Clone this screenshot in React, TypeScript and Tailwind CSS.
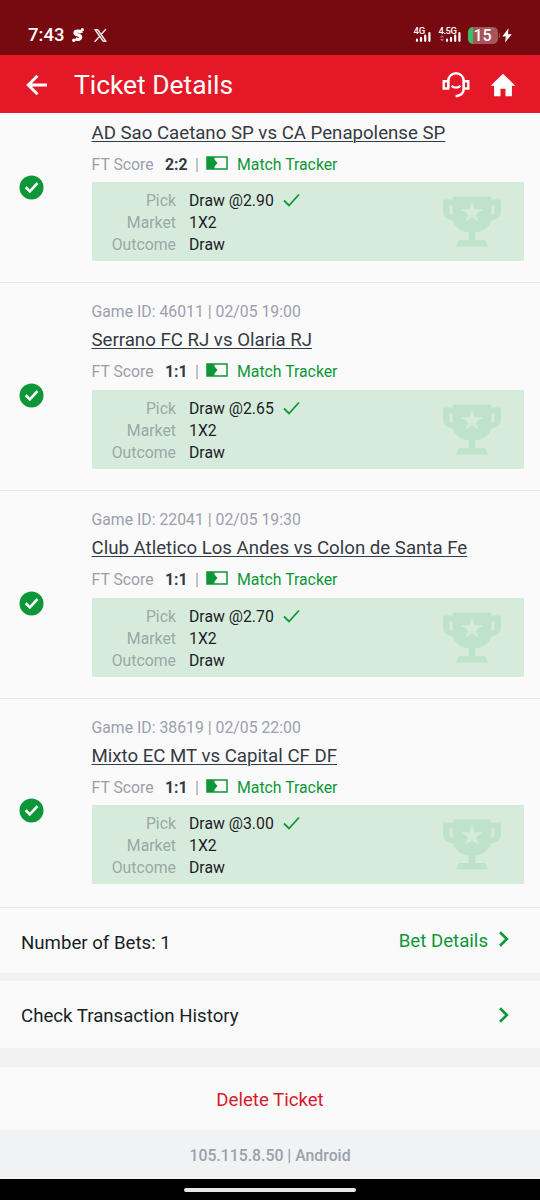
type Game = {
  id?: string;
  time?: string;
  name: string;
  score: string;
  odds: string;
};

const games: Game[] = [
  { name: "AD Sao Caetano SP vs CA Penapolense SP", score: "2:2", odds: "2.90" },
  { id: "46011", time: "02/05 19:00", name: "Serrano FC RJ vs Olaria RJ", score: "1:1", odds: "2.65" },
  { id: "22041", time: "02/05 19:30", name: "Club Atletico Los Andes vs Colon de Santa Fe", score: "1:1", odds: "2.70" },
  { id: "38619", time: "02/05 22:00", name: "Mixto EC MT vs Capital CF DF", score: "1:1", odds: "3.00" },
];

function Signal() {
  return (
    <svg className="w-4 h-[10px]" viewBox="0 0 16 10" fill="none" stroke="currentColor" strokeWidth={2.2} strokeLinecap="round">
      <path d="M2 7.7V8.8M6 5.8V8.8M10.2 3.6V8.8M14.4 1.2V8.8" />
    </svg>
  );
}

function StatusBar() {
  return (
    <div className="flex h-[55px] bg-[#770910] pt-[25px] pl-7 pr-[28px] text-white">
      <span className="w-[44px] text-[18.5px] leading-5 font-medium">7:43</span>
      <svg className="mt-[3px] w-[12px] h-[14px]" viewBox="0 0 12 14" fill="none" stroke="currentColor">
        <path d="M9.2 5.2C8.6 2.6 3.2 2.3 3 4.8C2.8 7.4 9 6.2 8.7 9.2C8.5 11.7 5.2 11.8 3.4 10.8" strokeWidth={3.3} />
        <circle cx="10.3" cy="1.7" r="1.6" fill="currentColor" stroke="none" />
        <circle cx="1.8" cy="12.2" r="1.7" fill="currentColor" stroke="none" />
      </svg>
      <svg className="ml-[10px] mt-[4px] w-[13px] h-[13px]" viewBox="0 0 24 24" fill="currentColor">
        <path d="M14.1 10.3 22.3 0.8h-2l-7.1 8.2L7.5 0.8H0.9l8.6 12.5L0.9 23.2h2l7.5-8.7 6 8.7h6.6ZM11.5 13.4l-.9-1.3L3.6 2.3h3l5.6 8 .9 1.3 7.3 10.3h-3Z" stroke="currentColor" strokeWidth="1.2" />
      </svg>
      {/* Mobile networks and battery */}
      <div className="ml-auto mt-px flex">
        <div className="flex w-[25px] flex-col">
          <span className="-ml-px h-[6px] text-[9.5px] leading-[9px] font-medium tracking-tight">4G</span>
          <Signal />
        </div>
        <div className="flex w-[28px] flex-col">
          <span className="-ml-px h-[6px] text-[9.5px] leading-[9px] font-medium tracking-tighter">4.5G</span>
          <div className="flex">
            <svg className="w-[5px] h-[10px]" viewBox="0 0 5 10" fill="#c0686f">
              <path d="M2 3 4 5.5H0ZM2 9.5 4 7H0Z" />
            </svg>
            <Signal />
          </div>
        </div>
        <div className="mt-px h-[17px] w-[30px] overflow-hidden rounded-[5px] bg-linear-to-r from-[#35c06c] from-16% to-[#a8545b] to-16% text-center text-[16px] leading-[18px] font-medium">
          15
        </div>
        <div className="mt-[7px] ml-[1px] h-[5px] w-[1.5px] rounded-r bg-[#a8545b]" />
        <svg className="ml-[2px] mt-[2px] w-[10px] h-[15px]" viewBox="0 0 10 15" fill="currentColor">
          <path d="M6.5.3.3 8.4h3.6L3 14.5 9.8 6.2H6Z" />
        </svg>
      </div>
    </div>
  );
}

function Header() {
  return (
    <header className="flex h-[58px] items-center bg-[#e41827] pl-[26px] pr-[24px] text-white">
      <svg className="mt-px w-[22px] h-[22px]" viewBox="0 0 22 22" fill="none" stroke="currentColor" strokeWidth={3}>
        <path d="M21 11H3M11.5 1.8 2.3 11l9.2 9.2" />
      </svg>
      <h1 className="ml-[26px] mt-[3px] whitespace-nowrap text-[26.4px]">Ticket Details</h1>
      <svg className="ml-auto w-[28px] h-[27px]" viewBox="0 0 28 27" fill="none" stroke="currentColor" strokeWidth={2.4}>
        <path d="M6.200 17.500V10a7.800 7.800 0 0 1 15.600 0v7c0 5-3.200 7.800-8.200 8.200" />
        <path d="M6.200 10.300H1.700v7.200H6.200ZM21.800 10.300h4.500v7.200h-4.500Z" />
        <path d="M9.600 14.800c2.600 2.300 6.200 2.300 8.800 0" />
      </svg>
      <svg className="ml-[20px] mt-px w-[26px] h-[24px]" viewBox="0 0 26 24" fill="currentColor">
        <path d="M13 .7.6 12.8h3.5v10.4h6.4v-7.5h5v7.5h6.4V12.8h3.5Z" />
      </svg>
    </header>
  );
}

function Trophy() {
  return (
    <svg className="w-[58px] h-[51px]" viewBox="0 0 58 51">
      <path
        fill="#bfe3ca"
        fillRule="evenodd"
        d="M10 .5h38v3h10v11.5c0 5-3 8.500-9.500 9.500C46 31 40.500 35.500 32.500 36.500V44H42L45 50.500H13L16 44H25.500V36.500C17.500 35.500 12 31 9.500 24.500 3 23.500 0 20 0 15V3.500H10ZM6.500 9.500v6c0 2 1.200 3.300 3 4V9.500ZM51.500 9.500h-3v10c1.800-.7 3-2 3-4Z"
      />
      <path fill="#d7ebdc" d="M29 5.500 31.500 13.200H39.800L33.100 18 35.700 26 29 21.100 22.300 26 24.900 18 18.200 13.200H26.500Z" />
    </svg>
  );
}

function GameRow({ game }: { game: Game }) {
  return (
    <li className={`group flex border-b border-[#e6e7ea] ${game.id ? "h-[208px] pt-4 last:h-[209px]" : "h-[170px] pt-[4px]"}`}>
      <div className="w-[92px] shrink-0">
        <svg className={`ml-[19px] w-[25px] h-[25px] ${game.id ? "mt-[84px] group-last:mt-[83px]" : "mt-[58px]"}`} viewBox="0 0 25 25">
          <circle cx="12.500" cy="12.500" r="12" fill="#0d9737" />
          <path d="m6.700 12.300 4.100 4.100 7.700-8.200" fill="none" stroke="#fff" strokeWidth={2.700} />
        </svg>
      </div>
      <div className="w-[432px]">
        {game.id && (
          <p className="-ml-[0.5px] text-[15.8px] leading-[25px] whitespace-nowrap text-[#9ca0ab]">
            Game ID: {game.id} | {game.time}
          </p>
        )}
        <p className="text-[18.65px] leading-8 whitespace-nowrap text-[#353a45]">
          <span className="-ml-[0.5px] underline decoration-1 underline-offset-[2px]">{game.name}</span>
        </p>
        <div className="-ml-[0.5px] mt-1 flex h-6 items-center text-[15.8px] whitespace-nowrap text-[#9ca0ab]">
          <span className="w-[73.5px]">FT Score</span>
          <span className="w-[30px] font-bold text-[#353a45]">{game.score}</span>
          <span className="w-[11px]">|</span>
          <svg className="-mt-[5px] w-[22px] h-[14px]" viewBox="0 0 22 14">
            <path d="M1 1h20v12H1Z" fill="none" stroke="#0d9737" strokeWidth={1.500} />
            <path d="M1 1h7.500V3.500L11.500 7l-3 3.500V13H1Z" fill="#0d9737" />
          </svg>
          <span className="ml-[9px] text-[#0d9737]">Match Tracker</span>
        </div>
        <div className={`flex h-[79px] justify-between rounded-[1px] bg-[#d7ebdc] pt-[8px] pr-[23px] ${game.id ? "mt-[6px] group-last:mt-[5px]" : "mt-[5px]"}`}>
          <dl className="grid grid-cols-[84px_auto] content-start gap-x-[13px] text-[15.8px] leading-[22px] whitespace-nowrap text-[#1b1e25]">
            <dt className="text-right text-[#9ba8a5]">Pick</dt>
            <dd className="flex items-center">
              Draw @{game.odds}
              <svg className="ml-[9px] -mt-[3px] w-[17px] h-[14px]" viewBox="0 0 17 14" fill="none" stroke="#0d9737" strokeWidth={1.800}>
                <path d="m1 7.500 5 5L16 1.500" />
              </svg>
            </dd>
            <dt className="text-right text-[#9ba8a5]">Market</dt>
            <dd>1X2</dd>
            <dt className="text-right text-[#9ba8a5]">Outcome</dt>
            <dd>Draw</dd>
          </dl>
          <div className="mt-[6px]">
            <Trophy />
          </div>
        </div>
      </div>
    </li>
  );
}

function Chevron() {
  return (
    <svg className="w-[12px] h-[16px]" viewBox="0 0 12 16" fill="none" stroke="#0d9737" strokeWidth={2.600}>
      <path d="m2 1.200 6.900 6.800L2 14.800" />
    </svg>
  );
}

export default function App() {
  return (
    <div className="h-[1200px] w-[540px] overflow-hidden bg-[#f1f2f4] font-['Roboto',sans-serif]">
      <StatusBar />
      <Header />
      <ul className="bg-[#fafafa]">
        {games.map((game) => (
          <GameRow key={game.name} game={game} />
        ))}
      </ul>

      <div className="flex h-[65px] items-center justify-between bg-[#fafafa] pl-[21px] pr-[30px] text-[18.65px]">
        <span className="mt-[6px] text-[#1b1e25]">Number of Bets: 1</span>
        <span className="mt-[2px] flex items-center gap-[10px] text-[#0d9737]">
          Bet Details
          <span className="-mt-[4px]">
            <Chevron />
          </span>
        </span>
      </div>

      <div className="mt-2 flex h-[67px] items-center justify-between bg-[#fafafa] pl-[21px] pr-[30px] text-[18.65px]">
        <span className="mt-[4px] text-[#1b1e25]">Check Transaction History</span>
        <Chevron />
      </div>

      <div className="mt-[19px] flex h-[63px] items-center justify-center bg-[#fafafa] pt-[4px] text-[18.65px] text-[#d8192b]">Delete Ticket</div>
      <div className="flex h-[49px] items-center justify-center pt-[2px] text-[15.8px] font-medium text-[#9ca0ab]">105.115.8.50 | Android</div>

      {/* Gesture bar */}
      <div className="flex h-[21px] justify-center bg-black pt-[9px]">
        <div className="h-[4px] w-[172px] rounded-full bg-[#e8e8e8]" />
      </div>
    </div>
  );
}
